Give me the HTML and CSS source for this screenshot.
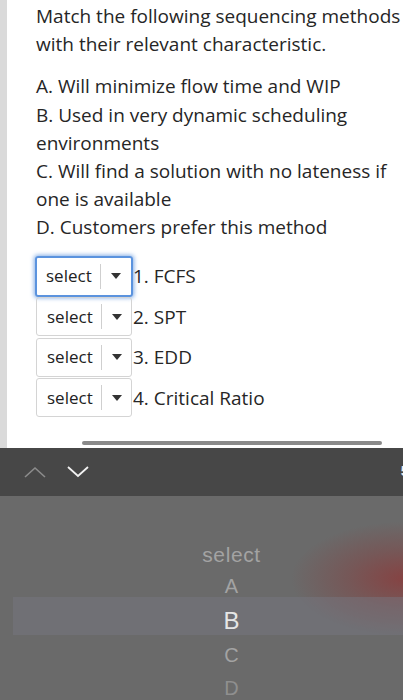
FILE: index.html
```html
<!DOCTYPE html>
<html>
<head>
<meta charset="utf-8">
<link rel="stylesheet" href="styles.css">
</head>
<body>
<div class="page">
  <div class="content">
    <p class="q">Match the following sequencing methods with their relevant characteristic.</p>
    <p class="opts">A. Will minimize flow time and WIP<br>B. Used in very dynamic scheduling environments<br>C. Will find a solution with no lateness if one is available<br>D. Customers prefer this method</p>
    <div class="rows">
      <div class="row"><div class="sel focus"><span class="st">select</span><span class="sep"></span><span class="tri"></span></div><span class="lbl">1. FCFS</span></div>
      <div class="row"><div class="sel"><span class="st">select</span><span class="sep"></span><span class="tri"></span></div><span class="lbl">2. SPT</span></div>
      <div class="row"><div class="sel"><span class="st">select</span><span class="sep"></span><span class="tri"></span></div><span class="lbl">3. EDD</span></div>
      <div class="row"><div class="sel"><span class="st">select</span><span class="sep"></span><span class="tri"></span></div><span class="lbl">4. Critical Ratio</span></div>
    </div>
    <div class="scroll"><div class="thumb"></div></div>
  </div>
</div>
<div class="toolbar">
  <svg class="chev" width="22" height="12" viewBox="0 0 22 12"><polyline points="1,11 11,2 21,11" fill="none" stroke="#8c8c8c" stroke-width="1.6"/></svg>
  <svg class="chev" width="22" height="12" viewBox="0 0 22 12"><polyline points="1,1 11,10 21,1" fill="none" stroke="#f2f2f2" stroke-width="1.8"/></svg>
  <span class="done">5</span>
</div>
<div class="picker">
  <div class="blur"></div>
  <div class="hl"></div>
  <div class="items">
    <div class="it s">select</div>
    <div class="it a">A</div>
    <div class="it b">B</div>
    <div class="it c">C</div>
    <div class="it d">D</div>
  </div>
</div>
</body>
</html>
```
FILE: styles.css
```css
html, body { margin: 0; padding: 0; }
body { width: 403px; height: 700px; overflow: hidden; background: #6a6a6a; }
.page {
  height: 448px;
  background: #fff;
  border-left: 7px solid #dadada;
  box-sizing: border-box;
  overflow: hidden;
}
.content {
  padding: 2px 0 0 29px;
  font-family: "Open Sans", sans-serif;
  color: #262626;
  font-size: 19px;
  line-height: 28.2px;
}
.content p { margin: 0; }
.q { margin-bottom: 14px !important; width: 367px; }
.opts { width: 360px; }
.rows { margin-top: 15px; display: flex; flex-direction: column; gap: 1.5px; }
.row { display: flex; align-items: center; height: 39px; }
.sel {
  width: 96px; height: 39px; box-sizing: border-box;
  border: 1px solid #d4d4d4; border-radius: 3px;
  display: flex; align-items: center;
  font-size: 17px; color: #222;
  padding-left: 10px;
}
.sel.focus {
  border: 2px solid #5b93de;
  box-shadow: 0 0 4px 1px rgba(80,140,220,0.7);
  padding-left: 9px;
  width: 98px; margin-left: -1px; margin-right: -1px;
  height: 41px;
}
.st { width: 54px; }
.sep { width: 1px; height: 25px; background: #cfcfcf; }
.tri {
  margin-left: 10px;
  width: 0; height: 0;
  border-left: 5.5px solid transparent;
  border-right: 5.5px solid transparent;
  border-top: 6px solid #333;
}
.lbl { margin-left: 1px; }
.scroll { margin-top: 24px; padding-left: 46px; }
.thumb { width: 300px; height: 4px; border-radius: 2px; background: #8a8a8a; }
.toolbar {
  height: 48px; background: #474747;
  display: flex; align-items: center; gap: 21px;
  padding-left: 24px; box-sizing: border-box;
  position: relative;
}
.done { position: absolute; right: -6px; top: 14px; color: #eee; font: bold 15px "Liberation Sans", sans-serif; }
.picker { height: 204px; position: relative; overflow: hidden; background: #6a6a6a; }
.blur {
  position: absolute; left: 290px; top: 25px; width: 230px; height: 115px;
  background: radial-gradient(ellipse at center, rgba(145,50,50,0.7) 0%, rgba(135,60,60,0.4) 35%, rgba(106,106,106,0) 70%);
}
.hl { position: absolute; left: 13px; right: 0; top: 101px; height: 38px; background: rgba(120,120,130,0.45); }
.items {
  position: relative;
  display: flex; flex-direction: column; align-items: center;
  padding-top: 42px; padding-left: 60px;
  font-family: "Liberation Sans", sans-serif;
}
.it { color: #a3a3a3; font-size: 20px; line-height: 33px; height: 33px; }
.it.s { height: 32px; font-size: 21px; letter-spacing: 0.6px; }
.it.b { color: #e6e6e6; font-size: 24px; line-height: 36px; height: 36px; }
.it.d { color: #8f8f8f; }
```
